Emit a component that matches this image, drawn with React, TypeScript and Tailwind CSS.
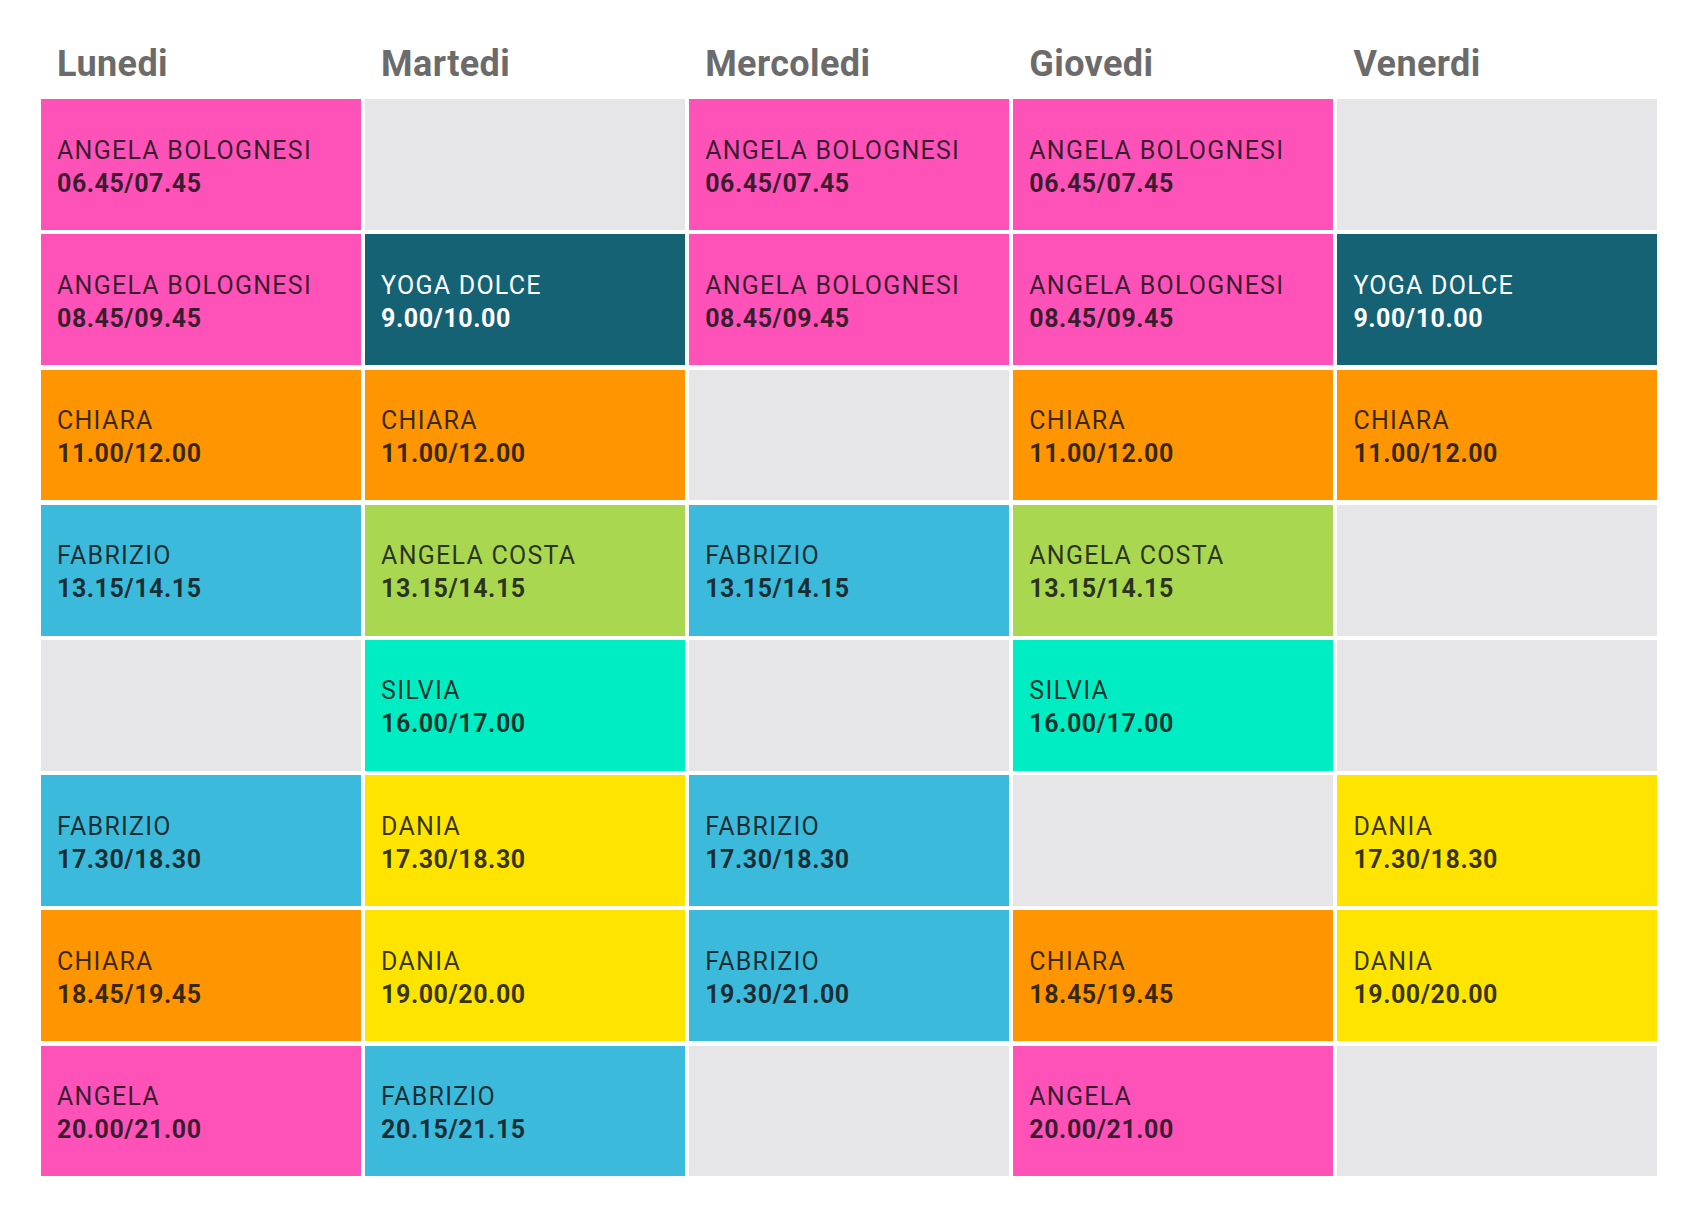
import React from "react";

type C = { c: string; n?: string; t?: string } | null;

const PINK = "bg-[#ff52b8]";
const TEAL = "bg-[#156275]";
const ORANGE = "bg-[#ff9500]";
const BLUE = "bg-[#3bbadb]";
const GREEN = "bg-[#a9d74f]";
const AQUA = "bg-[#00edc3]";
const YELLOW = "bg-[#ffe400]";

const days = ["Lunedi", "Martedi", "Mercoledi", "Giovedi", "Venerdi"];

const rows: C[][] = [
  [
    { c: PINK, n: "ANGELA BOLOGNESI", t: "06.45/07.45" },
    null,
    { c: PINK, n: "ANGELA BOLOGNESI", t: "06.45/07.45" },
    { c: PINK, n: "ANGELA BOLOGNESI", t: "06.45/07.45" },
    null,
  ],
  [
    { c: PINK, n: "ANGELA BOLOGNESI", t: "08.45/09.45" },
    { c: TEAL, n: "YOGA DOLCE", t: "9.00/10.00" },
    { c: PINK, n: "ANGELA BOLOGNESI", t: "08.45/09.45" },
    { c: PINK, n: "ANGELA BOLOGNESI", t: "08.45/09.45" },
    { c: TEAL, n: "YOGA DOLCE", t: "9.00/10.00" },
  ],
  [
    { c: ORANGE, n: "CHIARA", t: "11.00/12.00" },
    { c: ORANGE, n: "CHIARA", t: "11.00/12.00" },
    null,
    { c: ORANGE, n: "CHIARA", t: "11.00/12.00" },
    { c: ORANGE, n: "CHIARA", t: "11.00/12.00" },
  ],
  [
    { c: BLUE, n: "FABRIZIO", t: "13.15/14.15" },
    { c: GREEN, n: "ANGELA COSTA", t: "13.15/14.15" },
    { c: BLUE, n: "FABRIZIO", t: "13.15/14.15" },
    { c: GREEN, n: "ANGELA COSTA", t: "13.15/14.15" },
    null,
  ],
  [
    null,
    { c: AQUA, n: "SILVIA", t: "16.00/17.00" },
    null,
    { c: AQUA, n: "SILVIA", t: "16.00/17.00" },
    null,
  ],
  [
    { c: BLUE, n: "FABRIZIO", t: "17.30/18.30" },
    { c: YELLOW, n: "DANIA", t: "17.30/18.30" },
    { c: BLUE, n: "FABRIZIO", t: "17.30/18.30" },
    null,
    { c: YELLOW, n: "DANIA", t: "17.30/18.30" },
  ],
  [
    { c: ORANGE, n: "CHIARA", t: "18.45/19.45" },
    { c: YELLOW, n: "DANIA", t: "19.00/20.00" },
    { c: BLUE, n: "FABRIZIO", t: "19.30/21.00" },
    { c: ORANGE, n: "CHIARA", t: "18.45/19.45" },
    { c: YELLOW, n: "DANIA", t: "19.00/20.00" },
  ],
  [
    { c: PINK, n: "ANGELA", t: "20.00/21.00" },
    { c: BLUE, n: "FABRIZIO", t: "20.15/21.15" },
    null,
    { c: PINK, n: "ANGELA", t: "20.00/21.00" },
    null,
  ],
];

export default function App() {
  return (
    <div
      className="w-[1689px] h-[1205px] bg-white"
      style={{ fontFamily: "Roboto, 'Liberation Sans', sans-serif" }}
    >
      <div className="ml-[41px] w-[1616px]">
        <div className="grid grid-cols-5 gap-x-[4.5px] pt-[45.7px] pb-[17.6px]">
          {days.map((d) => (
            <div
              key={d}
              className="pl-[16px] text-[36px] leading-[36px] font-bold text-[#6b6b6b] tracking-[0.4px]"
            >
              {d}
            </div>
          ))}
        </div>
        <div className="grid grid-cols-5 gap-[4.5px] auto-rows-[130.7px]">
          {rows.flatMap((r, ri) =>
            r.map((cell, ci) => {
              if (!cell)
                return <div key={`${ri}-${ci}`} className="bg-[#e6e6e8]" />;
              const light = cell.c === TEAL;
              return (
                <div
                  key={`${ri}-${ci}`}
                  className={`${cell.c} flex items-center pl-[16px] pt-[4px] ${
                    light ? "text-white" : "text-[#141414]/85"
                  }`}
                >
                  <div className="text-[25px] leading-[33px]">
                    <div className="font-normal tracking-[1.25px]">{cell.n}</div>
                    <div className="font-bold tracking-[0.55px]">{cell.t}</div>
                  </div>
                </div>
              );
            })
          )}
        </div>
      </div>
    </div>
  );
}
